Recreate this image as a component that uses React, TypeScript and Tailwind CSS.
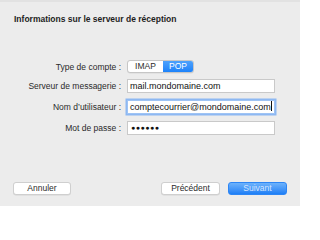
export default function App() {
  return (
    <div className="w-[300px] h-[206px] bg-[#ececec] border-t-2 border-[#e2e2e2] flex flex-col font-['Liberation_Sans',Arial,sans-serif] text-[#2a2a2a] overflow-hidden">
      <div className="pl-[14px] pt-[12px] text-[8.5px] leading-[10px] font-bold text-[#1e1e1e]">
        Informations sur le serveur de réception
      </div>

      <div className="mt-[36px] flex flex-col">
        <div className="flex items-center gap-[6px]">
          <span className="w-[121px] text-right text-[8.5px] leading-[10px]">Type de compte :</span>
          <div className="flex h-[13px] w-[67px] rounded-[3px] border border-[#c6c6c6] bg-white overflow-hidden text-[8.5px] leading-[11px] shadow-[0_0.5px_0_rgba(0,0,0,0.08)]">
            <span className="w-[35px] text-center text-[#2a2a2a]">IMAP</span>
            <span className="flex-1 text-center text-white bg-gradient-to-b from-[#4ca1fc] to-[#1b82fa]">POP</span>
          </div>
        </div>

        <div className="mt-[6px] flex items-center gap-[6px]">
          <span className="w-[121px] text-right text-[8.5px] leading-[10px]">Serveur de messagerie :</span>
          <div className="h-[14px] w-[148px] border border-[#c9c9c9] bg-white pl-[2px] text-[9px] leading-[12px] text-[#111]">
            mail.mondomaine.com
          </div>
        </div>

        <div className="mt-[7px] flex items-center gap-[6px]">
          <span className="w-[121px] text-right text-[8.5px] leading-[10px]">Nom d’utilisateur :</span>
          <div className="h-[14px] w-[148px] border border-[#9ec3f4] bg-white pl-[2px] text-[9px] leading-[12px] text-[#111] ring-[1.5px] ring-[#8db8f2]">
            comptecourrier@mondomaine.com<span className="inline-block w-px h-[10px] bg-[#111] align-[-1px]" />
          </div>
        </div>

        <div className="mt-[7px] flex items-center gap-[6px]">
          <span className="w-[121px] text-right text-[8.5px] leading-[10px]">Mot de passe :</span>
          <div className="h-[14px] w-[148px] border border-[#c9c9c9] bg-white pl-[3px] text-[7px] leading-[12px] tracking-[0.5px] text-[#111]">
            ●●●●●●
          </div>
        </div>
      </div>

      <div className="mt-auto mb-[11px] flex items-center px-[13px] gap-[8px] text-[8.5px]">
        <button className="h-[13px] w-[58px] rounded-[3px] border border-[#cfcfcf] bg-white leading-[11px] text-[#2a2a2a] shadow-[0_0.5px_0_rgba(0,0,0,0.1)]">
          Annuler
        </button>
        <div className="flex-1" />
        <button className="h-[13px] w-[59px] rounded-[3px] border border-[#cfcfcf] bg-white leading-[11px] text-[#2a2a2a] shadow-[0_0.5px_0_rgba(0,0,0,0.1)]">
          Précédent
        </button>
        <button className="h-[13px] w-[59px] rounded-[3px] border border-[#2d86f5] bg-gradient-to-b from-[#6db2fb] to-[#1c7ff6] leading-[11px] text-[#d3e6ff]">
          Suivant
        </button>
      </div>
    </div>
  );
}
